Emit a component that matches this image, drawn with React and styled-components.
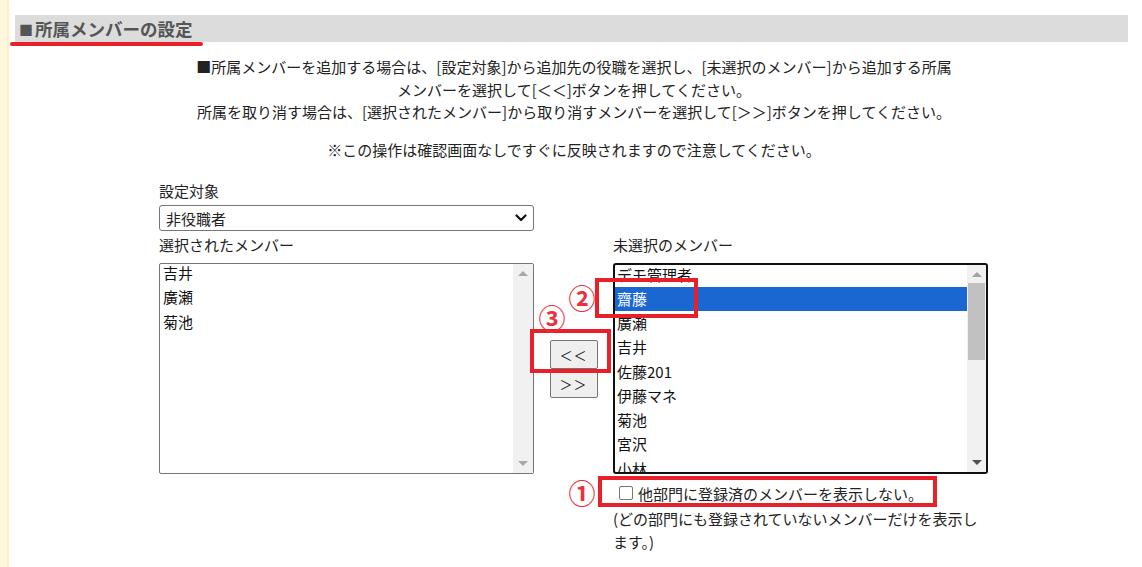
import React from 'react';
import styled, { createGlobalStyle } from 'styled-components';

const GlobalStyle = createGlobalStyle`
  html, body {
    margin: 0;
    padding: 0;
    background: #ffffff;
    font-family: "Noto Sans CJK JP", "Noto Sans", sans-serif;
    color: #222222;
  }
`

const Page = styled.div`
  display: flex;
  min-height: 567px;
`

const SideStrip = styled.div`
  width: 7px;
  flex: none;
  background-color: #fff8dc;
  border-right: 2px solid #ffefc2;
`

const Main = styled.div`
  flex: 1;
  padding: 15px 14px 0 6px;
`

const SectionHeader = styled.div`
  position: relative;
  height: 27px;
  line-height: 27px;
  padding-left: 4px;
  background-color: #dcdcdc;
  color: #555555;
  font-size: 17.5px;
  font-weight: 700;
`

const HeadMark = styled.span`
  font-size: 14px;
  margin-right: 2px;
  vertical-align: 1px;
`

const RedUnderline = styled.div`
  position: absolute;
  left: -5px;
  top: 27px;
  width: 193px;
  height: 4px;
  border-radius: 2px;
  background-color: #e8202a;
`

const Guide = styled.p`
  margin: 14px 0 0 0;
  padding-left: 5px;
  text-align: center;
  font-size: 15px;
  line-height: 22.5px;
`

const Notice = styled(Guide)`
  margin-top: 15px;
`

const Form = styled.div`
  position: relative;
  display: grid;
  grid-template-columns: 375px 79px 375px;
  margin: 19px 0 0 144px;
  width: 829px;
`

const FieldLabel = styled.div`
  font-size: 15px;
  line-height: 22px;
  margin-top: ${props => props.$top || 0}px;
  grid-column: ${props => props.$col || 1};
`

const SelectBox = styled.div`
  grid-column: 1;
  margin-top: 3px;
  height: 26px;
  box-sizing: border-box;
  border: 1px solid #767676;
  border-radius: 3px;
  display: flex;
  align-items: center;
  justify-content: space-between;
  padding: 0 6px 0 6px;
  font-size: 15px;
`

const ListBox = styled.div`
  grid-column: ${props => props.$col};
  margin-top: 7px;
  height: 211px;
  box-sizing: border-box;
  border: ${props => props.$focused ? '2px solid #101010' : '1px solid #767676'};
  border-radius: ${props => props.$focused ? '3px' : '2px'};
  display: flex;
  overflow: hidden;
`

const Items = styled.div`
  flex: 1;
  margin-top: ${props => props.$offset || 0}px;
`

const Item = styled.div`
  height: 24.25px;
  line-height: 24.25px;
  padding-left: ${props => props.$pad}px;
  font-size: 15px;
  white-space: nowrap;
  background-color: ${props => props.$selected ? '#1a67d2' : 'transparent'};
  color: ${props => props.$selected ? '#ffffff' : '#111111'};
`

const ScrollTrack = styled.div`
  width: ${props => props.$w}px;
  flex: none;
  background-color: #f1f1f1;
  display: flex;
  flex-direction: column;
  align-items: center;
`

const ArrowUp = styled.div`
  margin-top: 7px;
  width: 0;
  height: 0;
  border-left: 5px solid transparent;
  border-right: 5px solid transparent;
  border-bottom: 5px solid ${props => props.$dim ? '#a8a8a8' : '#a3a3a3'};
`

const ArrowDown = styled.div`
  margin-top: auto;
  margin-bottom: 7px;
  width: 0;
  height: 0;
  border-left: 5px solid transparent;
  border-right: 5px solid transparent;
  border-top: 5px solid ${props => props.$dim ? '#a8a8a8' : '#505050'};
`

const Thumb = styled.div`
  margin-top: 6px;
  width: calc(100% - 2px);
  height: 77px;
  background-color: #c1c1c1;
`

const ButtonColumn = styled.div`
  grid-column: 2;
  margin-top: 7px;
  display: flex;
  flex-direction: column;
  align-items: center;
  justify-content: center;
`

const MoveButton = styled.button`
  width: 48px;
  height: 29px;
  padding: 0;
  margin: 0;
  background-color: #efefef;
  border: 1px solid #767676;
  border-radius: 2px;
  font-family: "Noto Sans CJK JP", sans-serif;
  font-size: 13px;
  color: #111111;
  letter-spacing: 1px;
`

const OptionArea = styled.div`
  grid-column: 3;
  margin-top: 5px;
`

const CheckRow = styled.label`
  display: flex;
  align-items: center;
  height: 28px;
  padding-left: 6px;
  font-size: 15px;
`

const CheckBox = styled.span`
  width: 14px;
  height: 14px;
  box-sizing: border-box;
  border: 1px solid #767676;
  border-radius: 2px;
  margin-right: 5px;
  background: #ffffff;
`

const OptionNote = styled.div`
  font-size: 15px;
  line-height: 23px;
`

const RedFrame = styled.div`
  position: absolute;
  left: ${props => props.$x}px;
  top: ${props => props.$y}px;
  width: ${props => props.$w}px;
  height: ${props => props.$h}px;
  box-sizing: border-box;
  border: 4px solid #e8202a;
  pointer-events: none;
`

const StepMark = styled.span`
  position: absolute;
  left: ${props => props.$x}px;
  top: ${props => props.$y}px;
  width: 30px;
  height: 30px;
  line-height: 30px;
  text-align: center;
  font-size: 27px;
  font-weight: 700;
  color: #ec2f38;
`

function Chevron() {
  return (
    <svg width="12" height="8" viewBox="0 0 12 8">
      <path d="M1.5 1.5 L6 6 L10.5 1.5" fill="none" stroke="#111" strokeWidth="2.2" strokeLinecap="round" strokeLinejoin="round" />
    </svg>
  );
}

function App() {
  const selectedMembers = ['吉井', '廣瀬', '菊池'];
  const freeMembers = ['デモ管理者', '齋藤', '廣瀬', '吉井', '佐藤201', '伊藤マネ', '菊池', '宮沢', '小林'];

  return (
    <Page>
      <GlobalStyle />
      <SideStrip />
      <Main>
        <SectionHeader>
          <HeadMark>■</HeadMark>所属メンバーの設定
          <RedUnderline />
        </SectionHeader>
        <Guide>
          ■所属メンバーを追加する場合は、[設定対象]から追加先の役職を選択し、[未選択のメンバー]から追加する所属<br />
          メンバーを選択して[＜＜]ボタンを押してください。<br />
          所属を取り消す場合は、[選択されたメンバー]から取り消すメンバーを選択して[＞＞]ボタンを押してください。
        </Guide>
        <Notice>※この操作は確認画面なしですぐに反映されますので注意してください。</Notice>

        <Form>
          <FieldLabel>設定対象</FieldLabel>
          <div />
          <div />
          <SelectBox>
            <span>非役職者</span>
            <Chevron />
          </SelectBox>
          <div />
          <div />

          <FieldLabel $top={3} $col={1}>選択されたメンバー</FieldLabel>
          <div />
          <FieldLabel $top={3} $col={3}>未選択のメンバー</FieldLabel>

          <ListBox $col={1}>
            <Items $offset={-3}>
              {selectedMembers.map((name) => (
                <Item key={name} $pad={3}>{name}</Item>
              ))}
            </Items>
            <ScrollTrack $w={20}>
              <ArrowUp $dim />
              <ArrowDown $dim />
            </ScrollTrack>
          </ListBox>

          <ButtonColumn>
            <MoveButton>＜＜</MoveButton>
            <MoveButton>＞＞</MoveButton>
          </ButtonColumn>

          <ListBox $col={3} $focused>
            <Items $offset={-2.5}>
              {freeMembers.map((name, i) => (
                <Item key={name + i} $pad={2} $selected={name === '齋藤'}>{name}</Item>
              ))}
            </Items>
            <ScrollTrack $w={19}>
              <ArrowUp />
              <Thumb />
              <ArrowDown />
            </ScrollTrack>
          </ListBox>

          <div />
          <div />
          <OptionArea>
            <CheckRow>
              <CheckBox />
              他部門に登録済のメンバーを表示しない。
            </CheckRow>
            <OptionNote>
              (どの部門にも登録されていないメンバーだけを表示し<br />
              ます。)
            </OptionNote>
          </OptionArea>

          <RedFrame $x={439} $y={296} $w={339} $h={31} />
          <RedFrame $x={436} $y={98} $w={103} $h={40} />
          <RedFrame $x={371} $y={149} $w={81} $h={44} />
          <StepMark $x={408} $y={298}>①</StepMark>
          <StepMark $x={408} $y={103}>②</StepMark>
          <StepMark $x={378} $y={123}>③</StepMark>
        </Form>
      </Main>
    </Page>
  );
}

export default App;
